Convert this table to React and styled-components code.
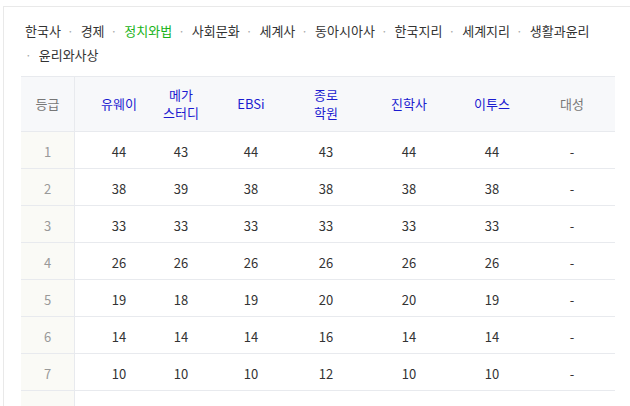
import React from "react";
import styled, { createGlobalStyle } from "styled-components";

const Global = createGlobalStyle`
  html, body { margin: 0; padding: 0; background: #fff; overflow: hidden; }
  body { font-family: "Noto Sans CJK KR", "Noto Sans", sans-serif; }
`;

const Frame = styled.div`
  margin: 6px 0 0 3px;
  border-top: 1px solid #e9e9e9;
  border-left: 1px solid #e9e9e9;
  padding: 12px 0 0 17px;
  height: 400px;
`;

const Tabs = styled.ul`
  list-style: none;
  margin: 0;
  padding: 0 0 0 4px;
  width: 590px;
  display: flex;
  flex-wrap: wrap;
  column-gap: 6px;
  font-size: 13px;
  line-height: 24px;
`;

const Tab = styled.li`
  display: flex;
  align-items: center;
  color: ${(p) => (p.$active ? "#19b319" : "#333")};
  white-space: nowrap;
  &::before {
    content: ${(p) => (p.$first ? "none" : '"·"')};
    color: #aaa;
    margin-right: 7px;
    font-size: 12px;
  }
`;

const Table = styled.div`
  margin-top: 9px;
  width: 594px;
  font-size: 13px;
`;

const COLS = "54px 88px 36px 104px 46px 120px 46px 100px";

const HeadRow = styled.div`
  display: grid;
  grid-template-columns: ${COLS};
  height: 56px;
  box-sizing: border-box;
  border-top: 1px solid #e8eaee;
  border-bottom: 1px solid #e8eaee;
  background: #f7f8fa;
`;

const Row = styled.div`
  display: grid;
  grid-template-columns: ${COLS};
  height: 37px;
  box-sizing: border-box;
  border-bottom: 1px solid #e8eaee;
`;

const Cell = styled.div`
  display: flex;
  align-items: center;
  justify-content: center;
  text-align: center;
  padding-left: ${(p) => (p.$shift ? "14px" : "0")};
  padding-top: ${(p) => (p.$head ? "0" : "3px")};
  line-height: ${(p) => (p.$head ? "18px" : "20px")};
  color: ${(p) => p.$color || "#333"};
  ${(p) =>
    p.$grade
      ? `border-right: 1px solid #e8eaee; background: ${p.$head ? "transparent" : "#fafaf6"};`
      : ""}
`;

const Link = styled.span`
  color: #1b1bd0;
`;

const heads = [
  { t: "등급", grade: true },
  { t: ["유웨이"], link: true },
  { t: ["메가", "스터디"], link: true },
  { t: ["EBSi"], link: true },
  { t: ["종로", "학원"], link: true },
  { t: ["진학사"], link: true },
  { t: ["이투스"], link: true },
  { t: "대성", shift: true },
];

const data = [
  [1, 44, 43, 44, 43, 44, 44],
  [2, 38, 39, 38, 38, 38, 38],
  [3, 33, 33, 33, 33, 33, 33],
  [4, 26, 26, 26, 26, 26, 26],
  [5, 19, 18, 19, 20, 20, 19],
  [6, 14, 14, 14, 16, 14, 14],
  [7, 10, 10, 10, 12, 10, 10],
  [8, "", "", "", "", "", ""],
];

const tabs = [
  "한국사",
  "경제",
  "정치와법",
  "사회문화",
  "세계사",
  "동아시아사",
  "한국지리",
  "세계지리",
  "생활과윤리",
  "윤리와사상",
];

export default function App() {
  return (
    <>
      <Global />
      <Frame>
        <Tabs>
          {tabs.map((t, i) => (
            <Tab key={t} $first={i === 0} $active={t === "정치와법"}>
              {t}
            </Tab>
          ))}
        </Tabs>
        <Table>
          <HeadRow>
            {heads.map((h, i) => (
              <Cell
                key={i}
                $head
                $grade={h.grade}
                $shift={h.shift}
                $color={h.link ? undefined : "#777"}
              >
                {h.link ? (
                  <Link>
                    {h.t.map((line, j) => (
                      <React.Fragment key={j}>
                        {j > 0 && <br />}
                        {line}
                      </React.Fragment>
                    ))}
                  </Link>
                ) : (
                  h.t
                )}
              </Cell>
            ))}
          </HeadRow>
          {data.map((r) => (
            <Row key={r[0]}>
              <Cell $grade $color="#999">
                {r[0]}
              </Cell>
              {r.slice(1).map((v, j) => (
                <Cell key={j}>{v}</Cell>
              ))}
              <Cell $shift>{r[1] === "" ? "" : "-"}</Cell>
            </Row>
          ))}
        </Table>
      </Frame>
    </>
  );
}
